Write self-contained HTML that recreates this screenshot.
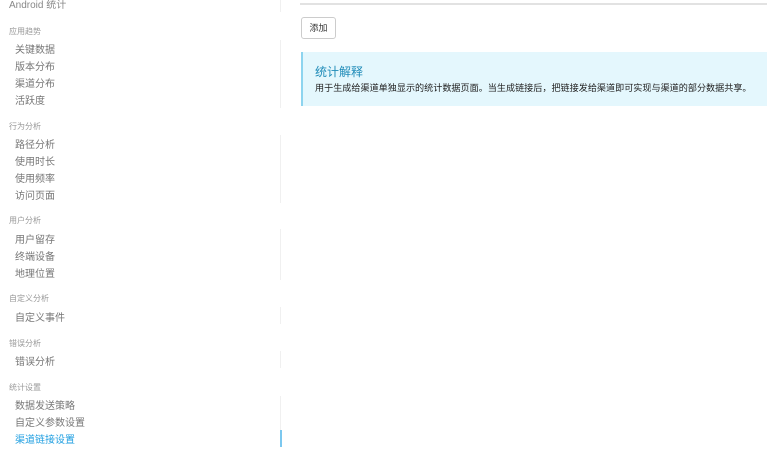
<!DOCTYPE html>
<html><head><meta charset="utf-8"><style>
body{margin:0;width:767px;height:450px;overflow:hidden;background:#fff;font-family:"Liberation Sans","Noto Sans CJK SC",sans-serif;position:relative}
.a{position:absolute;white-space:nowrap}
.h{font-size:8px;color:#999;left:9px}
.i{font-size:10px;color:#777;left:15px}
.bl{position:absolute;left:280px;width:1px;background:#f0f0f0}
</style></head><body>
<div class="a" style="left:9px;top:-4px;font-size:10px;color:#888">Android 统计</div>
<div class="bl" style="top:0;height:12px"></div>
<div class="a h" style="top:26px">应用趋势</div>
<div class="bl" style="top:40px;height:68px"></div>
<div class="a i" style="top:41px">关键数据</div>
<div class="a i" style="top:58px">版本分布</div>
<div class="a i" style="top:75px">渠道分布</div>
<div class="a i" style="top:92px">活跃度</div>
<div class="a h" style="top:121px">行为分析</div>
<div class="bl" style="top:135px;height:68px"></div>
<div class="a i" style="top:136px">路径分析</div>
<div class="a i" style="top:153px">使用时长</div>
<div class="a i" style="top:170px">使用频率</div>
<div class="a i" style="top:187px">访问页面</div>
<div class="a h" style="top:215px">用户分析</div>
<div class="bl" style="top:229px;height:51px"></div>
<div class="a i" style="top:231px">用户留存</div>
<div class="a i" style="top:248px">终端设备</div>
<div class="a i" style="top:265px">地理位置</div>
<div class="a h" style="top:293px">自定义分析</div>
<div class="bl" style="top:307px;height:17px"></div>
<div class="a i" style="top:309px">自定义事件</div>
<div class="a h" style="top:338px">错误分析</div>
<div class="bl" style="top:351px;height:17px"></div>
<div class="a i" style="top:353px">错误分析</div>
<div class="a h" style="top:382px">统计设置</div>
<div class="bl" style="top:396px;height:34px"></div>
<div class="a i" style="top:397px">数据发送策略</div>
<div class="a i" style="top:414px">自定义参数设置</div>
<div class="a i" style="top:431px;color:#1e9ee0">渠道链接设置</div>
<div style="position:absolute;left:280px;top:430px;width:2px;height:17px;background:#7cc8ef"></div>

<div style="position:absolute;left:300px;top:3px;width:467px;height:2px;background:#e2e2e2"></div>
<div class="a" style="left:301px;top:17px;width:33px;height:20px;border:1px solid #ccc;border-radius:3px;font-size:9px;color:#333;line-height:20px;text-align:center">添加</div>
<div style="position:absolute;left:301px;top:52px;width:466px;height:54px;background:#e4f7fd;border-left:2px solid #8dd4ef"></div>
<div class="a" style="left:315px;top:63px;font-size:12px;color:#1f8bb8">统计解释</div>
<div class="a" style="left:315px;top:80px;font-size:9.1px;color:#222">用于生成给渠道单独显示的统计数据页面。当生成链接后，把链接发给渠道即可实现与渠道的部分数据共享。</div>
</body></html>
